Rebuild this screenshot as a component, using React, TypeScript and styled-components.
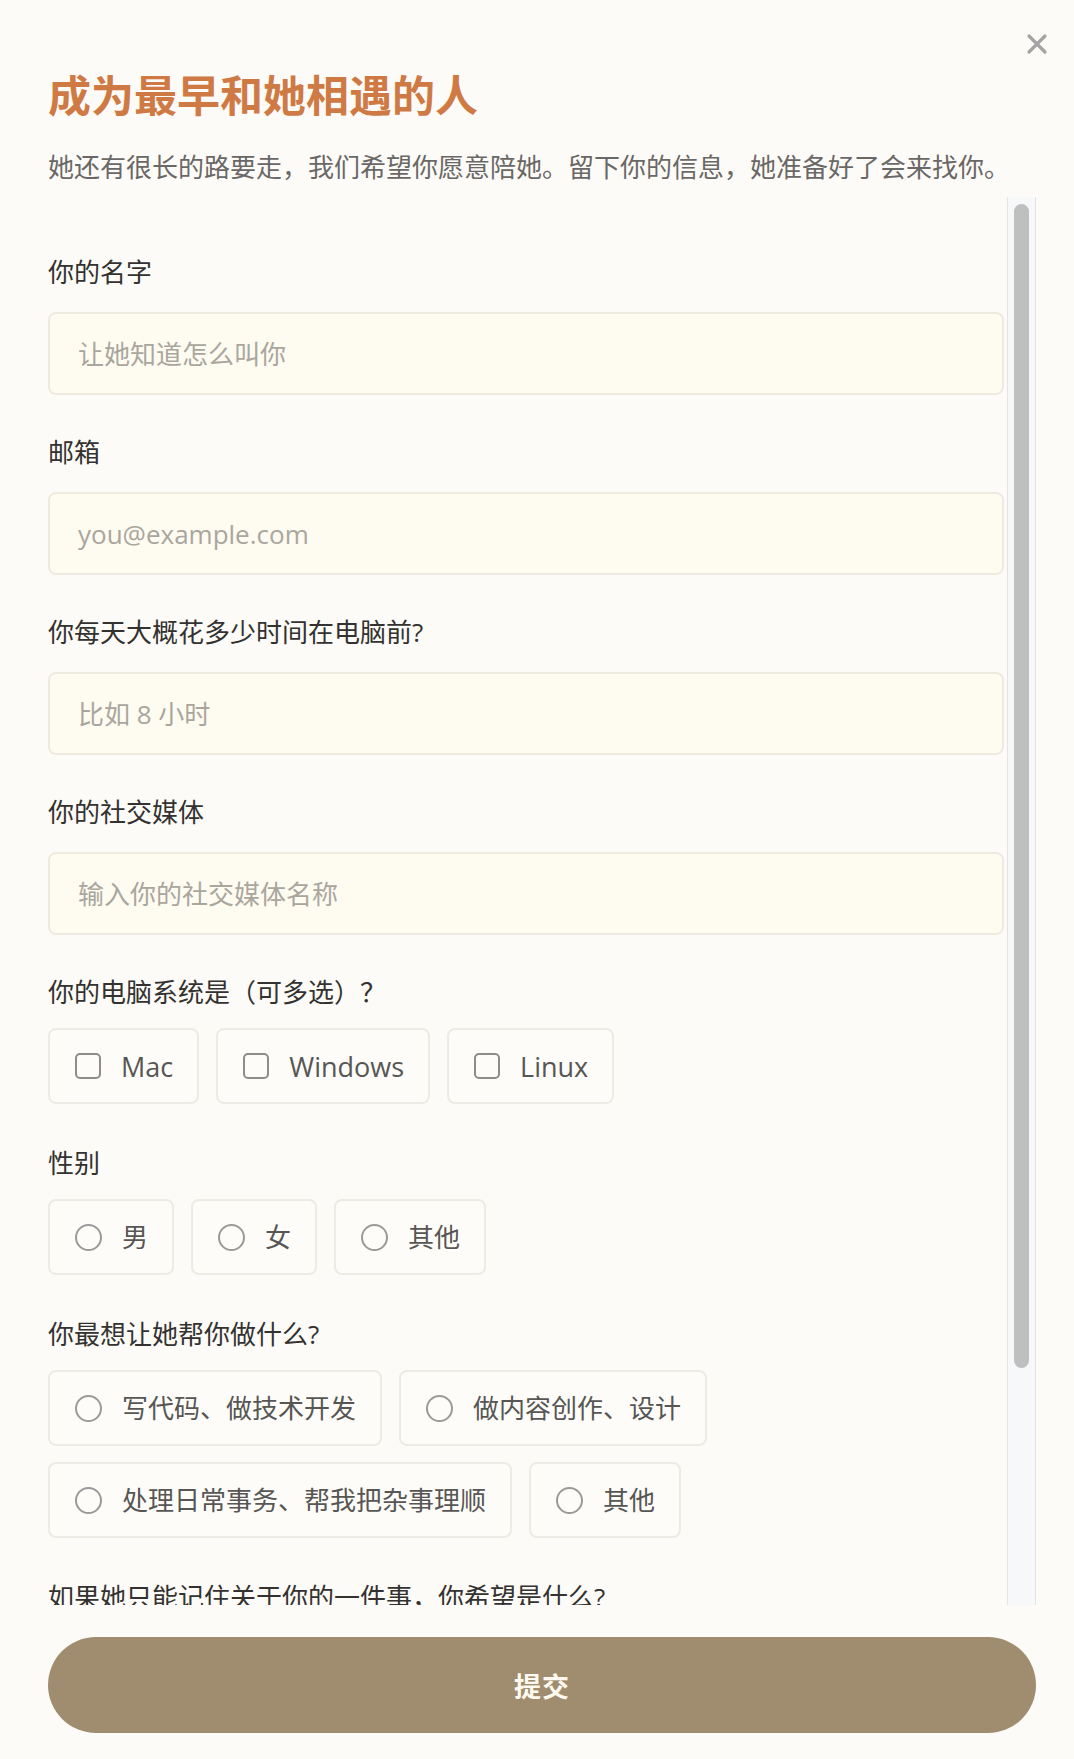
import React, { useLayoutEffect, useRef, useState } from 'react'
import styled, { createGlobalStyle } from 'styled-components'

const font = `"Open Sans", "Noto Sans CJK SC", "Noto Sans", sans-serif`

const GlobalStyle = createGlobalStyle`
html, body {
  margin: 0;
  padding: 0;
  background: #fdfbf7;
}
* { box-sizing: border-box; }
`

interface iOption {
    label: string
    kind: 'check' | 'radio'
}

const Option: React.FC<iOption> = ({ label, kind }) => {
    return (
        <OptionBox>
            {kind === 'check' ? <CheckMark /> : <RadioMark />}
            <OptionText $latin={kind === 'check'}>{label}</OptionText>
        </OptionBox>
    )
}

const CloseIcon = () => (
    <svg width="22" height="22" viewBox="0 0 22 22">
        <path d="M3 3 L19 19 M19 3 L3 19" stroke="#a3a3a3" strokeWidth="3.2" strokeLinecap="round" />
    </svg>
)

const App = () => {
    const viewRef = useRef<HTMLDivElement>(null)
    const railRef = useRef<HTMLDivElement>(null)
    const [thumb, setThumb] = useState({ top: 0, height: 0 })

    // custom scrollbar, sized from the viewport's real scroll height
    const measure = () => {
        const v = viewRef.current
        const r = railRef.current
        if (!v || !r) return
        const inner = r.clientHeight - 14
        const height = (v.clientHeight / v.scrollHeight) * inner
        const top = (v.scrollTop / v.scrollHeight) * inner
        setThumb({ top, height })
    }

    useLayoutEffect(() => {
        measure()
        window.addEventListener('resize', measure)
        return () => window.removeEventListener('resize', measure)
    }, [])

    return (
        <Page>
            <GlobalStyle />
            <Close aria-label="关闭"><CloseIcon /></Close>

            <Title>成为最早和她相遇的人</Title>
            <Subtitle>她还有很长的路要走，我们希望你愿意陪她。留下你的信息，她准备好了会来找你。</Subtitle>

            <ScrollArea>
                <Viewport ref={viewRef} onScroll={measure}>
                    <Field>
                        <Label>你的名字</Label>
                        <Input placeholder="让她知道怎么叫你" />
                    </Field>
                    <Field>
                        <Label>邮箱</Label>
                        <Input placeholder="you@example.com" />
                    </Field>
                    <Field>
                        <Label>你每天大概花多少时间在电脑前?</Label>
                        <Input placeholder="比如 8 小时" />
                    </Field>
                    <Field>
                        <Label>你的社交媒体</Label>
                        <Input placeholder="输入你的社交媒体名称" />
                    </Field>
                    <Field $choice>
                        <Label $tight>你的电脑系统是（可多选）？</Label>
                        <Options>
                            <Option kind="check" label="Mac" />
                            <Option kind="check" label="Windows" />
                            <Option kind="check" label="Linux" />
                        </Options>
                    </Field>
                    <Field $choice>
                        <Label $tight>性别</Label>
                        <Options>
                            <Option kind="radio" label="男" />
                            <Option kind="radio" label="女" />
                            <Option kind="radio" label="其他" />
                        </Options>
                    </Field>
                    <Field $choice>
                        <Label $tight>你最想让她帮你做什么?</Label>
                        <Options>
                            <Option kind="radio" label="写代码、做技术开发" />
                            <Option kind="radio" label="做内容创作、设计" />
                            <Option kind="radio" label="处理日常事务、帮我把杂事理顺" />
                            <Option kind="radio" label="其他" />
                        </Options>
                    </Field>
                    <Field>
                        <Label>如果她只能记住关于你的一件事，你希望是什么?</Label>
                        <TextArea placeholder="写下你想让她记住的事" />
                    </Field>
                </Viewport>
                <Rail ref={railRef}>
                    <Thumb style={{ height: thumb.height, transform: `translateY(${thumb.top}px)` }} />
                </Rail>
            </ScrollArea>

            <Submit>提交</Submit>
        </Page>
    )
}

export default App


const Page = styled.div`
position: relative;
height: 100vh;
display: flex;
flex-direction: column;
padding: 68px 38px 26px 48px;
background: #fdfbf7;
font-family: ${font};
`

const Close = styled.button`
position: absolute;
top: 33px;
right: 26px;
width: 22px;
height: 22px;
padding: 0;
border: none;
background: none;
display: flex;
`

const Title = styled.h1`
margin: 0;
font-size: 43px;
line-height: 56px;
font-weight: 700;
color: #cf7a44;
`

const Subtitle = styled.p`
margin: 24px 0 10px;
font-size: 26px;
line-height: 39px;
color: #6a6866;
white-space: nowrap;
`

const ScrollArea = styled.div`
flex: 1;
min-height: 0;
display: flex;
`

const Viewport = styled.div`
flex: 1;
min-width: 0;
overflow-y: auto;
scrollbar-width: none;
padding: 56px 3px 8px 0;

&::-webkit-scrollbar {
    display: none;
}
`

const Rail = styled.div`
width: 29px;
flex-shrink: 0;
padding: 7px 6px;
background: #f7f8fa;
border-left: 1px solid #e4e4e4;
border-right: 1px solid #e4e4e4;
`

const Thumb = styled.div`
width: 100%;
border-radius: 8px;
background: #bebfbf;
`

const Field = styled.div<{ $choice?: boolean }>`
margin-bottom: ${({ $choice }) => ($choice ? '40px' : '38px')};
`

const Label = styled.div<{ $tight?: boolean }>`
font-size: 26px;
line-height: 39px;
color: #333230;
margin-bottom: ${({ $tight }) => ($tight ? '16px' : '20px')};
`

const Input = styled.input`
display: block;
width: 100%;
height: 83px;
padding: 0 28px;
border: 2px solid #eeeae0;
border-radius: 8px;
background: #fefbf1;
font-family: ${font};
font-size: 26px;
color: #333;
outline: none;

&::placeholder {
    color: #aaa69e;
}
`

const TextArea = styled.textarea`
display: block;
width: 100%;
height: 200px;
padding: 24px 28px;
border: 2px solid #eeeae0;
border-radius: 8px;
background: #fefbf1;
font-family: ${font};
font-size: 26px;
resize: none;
outline: none;

&::placeholder {
    color: #aaa69e;
}
`

const Options = styled.div`
display: flex;
flex-wrap: wrap;
gap: 16px 17px;
`

const OptionBox = styled.label`
height: 76px;
display: flex;
align-items: center;
gap: 20px;
padding: 0 24px 0 25px;
border: 2px solid #eeebe4;
border-radius: 8px;
background: #fdfcf9;
`

const CheckMark = styled.span`
width: 26px;
height: 26px;
border: 2px solid #8c8c8c;
border-radius: 5px;
flex-shrink: 0;
`

const RadioMark = styled.span`
width: 27px;
height: 27px;
border: 2px solid #9a9a9a;
border-radius: 50%;
flex-shrink: 0;
`

const OptionText = styled.span<{ $latin?: boolean }>`
font-size: ${({ $latin }) => ($latin ? '27px' : '26px')};
line-height: 1;
color: #575654;
white-space: nowrap;
`

const Submit = styled.button`
margin-top: 32px;
height: 96px;
width: 100%;
border: none;
border-radius: 48px;
background: #a08d6f;
color: #fffaf0;
font-family: ${font};
font-size: 27px;
font-weight: 600;
letter-spacing: 1px;
`
